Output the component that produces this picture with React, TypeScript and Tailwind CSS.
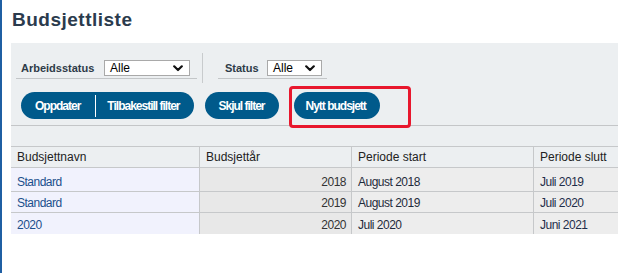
import React from "react";

const font = { fontFamily: '"Liberation Sans", Arial, sans-serif' };

function Chevron() {
  return (
    <svg width="10" height="7" viewBox="0 0 10 7" className="shrink-0">
      <path d="M1.2 1.3 L5 5 L8.8 1.3" fill="none" stroke="#111" strokeWidth="2.2" strokeLinecap="round" strokeLinejoin="round" />
    </svg>
  );
}

function Select({ w }: { w: string }) {
  return (
    <div className={`${w} h-[16px] bg-white border border-[#a9a9a9] flex items-center justify-between pl-[5px] pr-[6px]`}>
      <span className="text-[12px] leading-none text-black">Alle</span>
      <Chevron />
    </div>
  );
}

const rows = [
  { name: "Standard", year: "2018", start: "August 2018", end: "Juli 2019", h: "h-[24px]" },
  { name: "Standard", year: "2019", start: "August 2019", end: "Juli 2020", h: "h-[21px]" },
  { name: "2020", year: "2020", start: "Juli 2020", end: "Juni 2021", h: "h-[21px]" },
];

export default function App() {
  return (
    <div className="w-[618px] h-[273px] bg-white flex overflow-hidden relative" style={font}>
      <div className="w-[2px] h-full bg-[#1f5fa3] shrink-0" />
      <div className="flex-1 flex flex-col pl-[9px]">
        <div className="h-[43px] pt-[9px] pl-[1px]">
          <h1 className="text-[19px] font-bold text-[#2b3b4d] leading-[22px] tracking-[0.5px]">Budsjettliste</h1>
        </div>
        <div className="bg-[#eceff1] flex flex-col relative">
          {/* Filter row */}
          <div className="flex items-start pt-[10px]">
            <div className="ml-[5px] w-[181px] h-[26px] flex items-end pb-[2px] border-b border-[#c3c6c8]">
              <span className="ml-[5px] w-[83px] text-[11px] font-bold text-[#2e3b48] leading-[16px]">Arbeidsstatus</span>
              <Select w="w-[86px]" />
            </div>
            <div className="ml-[5px] w-px h-[30px] bg-[#c8cbcd]" />
            <div className="ml-[15px] w-[109px] h-[26px] flex items-end pb-[2px] border-b border-[#c3c6c8]">
              <span className="ml-[7px] w-[42px] text-[11px] font-bold text-[#2e3b48] leading-[16px]">Status</span>
              <Select w="w-[55px]" />
            </div>
          </div>
          {/* Buttons row */}
          <div className="flex items-center mt-[9px] ml-[10px] h-[27px] text-white text-[12px] font-bold tracking-[-1px]">
            <div className="h-[27px] rounded-full bg-[#005a8b] flex items-center">
              <span className="pl-[14px] pr-[15px]">Oppdater</span>
              <span className="w-px h-[22px] bg-white" />
              <span className="pl-[11px] pr-[14px]">Tilbakestill filter</span>
            </div>
            <div className="ml-[11px] h-[27px] rounded-full bg-[#005a8b] flex items-center px-[14px]">Skjul filter</div>
            <div className="ml-[15px] h-[27px] rounded-full bg-[#005a8b] flex items-center pl-[12px] pr-[14px]">Nytt budsjett</div>
          </div>
          <div className="mt-[6px] border-b border-[#c4c6c8]" />
          <div className="h-[20px]" />
          {/* Table */}
          <div className="grid grid-cols-[189px_152px_182px_1fr] text-[12px] leading-none">
            {["Budsjettnavn", "Budsjettår", "Periode start", "Periode slutt"].map((h, i) => (
              <div
                key={h}
                className={`h-[22px] border-t border-b border-[#c6c8ca] flex items-center pl-[6px] text-[#222] ${i < 3 ? "border-r" : ""}`}
              >
                {h}
              </div>
            ))}
            {rows.map((r, ri) => (
              <React.Fragment key={ri}>
                <div className={`${r.h} bg-[#f1f2fd] border-r border-[#c6c8ca] ${ri < 2 ? "border-b" : ""} flex items-end pb-[3px] pl-[6px] text-[#1b4f8c] tracking-[-0.5px]`}>{r.name}</div>
                <div className={`${r.h} bg-[#e8e8e8] border-r border-[#c6c8ca] ${ri < 2 ? "border-b" : ""} flex items-end justify-end pb-[3px] pr-[5px] text-[#333] tracking-[-0.5px]`}>{r.year}</div>
                <div className={`${r.h} bg-[#ededed] border-r border-[#c6c8ca] ${ri < 2 ? "border-b" : ""} flex items-end pb-[3px] pl-[6px] text-[#1f2b3b] tracking-[-0.5px]`}>{r.start}</div>
                <div className={`${r.h} bg-[#ededed] border-[#c6c8ca] ${ri < 2 ? "border-b" : ""} flex items-end pb-[3px] pl-[6px] text-[#1f2e4a] tracking-[-0.5px]`}>{r.end}</div>
              </React.Fragment>
            ))}
          </div>
          {/* Red highlight annotation */}
          <div className="absolute left-[278px] top-[43px] w-[122px] h-[42px] border-[3px] border-[#e8172d] rounded-[4px]" />
        </div>
      </div>
    </div>
  );
}
